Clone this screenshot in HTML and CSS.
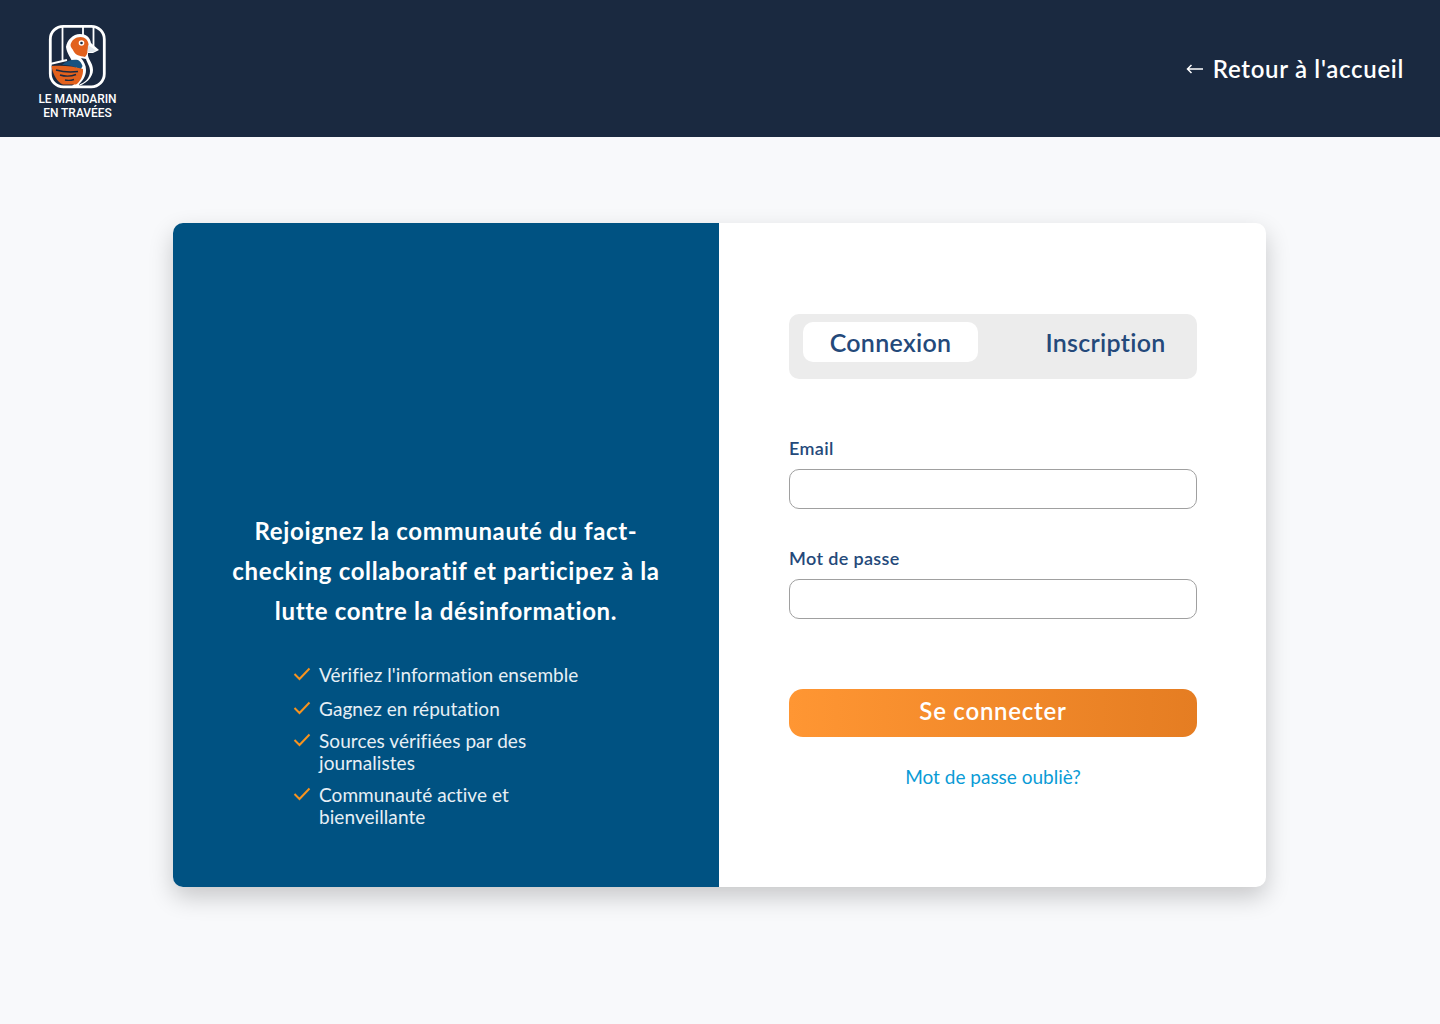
FILE: index.html
```html
<!DOCTYPE html>
<html lang="fr">
<head>
<meta charset="utf-8">
<title>Le Mandarin en Travées</title>
<link rel="stylesheet" href="styles.css">
</head>
<body>
<header class="site-header">
  <a class="brand" href="#">
    <svg class="brand-mark" width="60" height="66" viewBox="47 23 60 66" fill="none">
      <rect x="50.300" y="26.300" width="54" height="60.500" rx="13" fill="#1a2940" stroke="#fff" stroke-width="2.800"/>
      <path d="M62.500 26v35M83 26v9M93.500 26v20M50 64l17-4" stroke="#fff" stroke-width="1.800"/>
      <path d="M66 47c1-7 7-13 14-13 6 0 10 3 11 9l8 7-6 3h-5c-1 6 5 9 5 17 0 7-7 15-18 17l-3-1c5-4 7-9 6-14-1-4-3-6-5-9-2-5-6-9-7-16z" fill="#fff"/>
      <path d="M70.500 45c1-5 5-8 10-8 4.500 0 7.500 3 8 7 .3 3-.7 5-1 8-.3 2-1.500 4-2.500 5-5-1-10-2-11.500-6-.7-2-3-3.500-3-6z" fill="#e2611d"/>
      <circle cx="81.500" cy="43" r="2.800" fill="#fff"/><circle cx="81.500" cy="43" r="1.300" fill="#1a2940"/>
      <path d="M88 45l8 5.500-3 1.500h-5.500z" fill="#dfe6ec"/>
      <path d="M81 58c3 4 5 7 5 12 0 6-3 11-8 15 7-2 12-7 12-14 0-5-3-8-4-12z" fill="#1a2940"/>
      <path d="M62 65c4-4 10-6 16-5 2 1 3.500 3 4.500 6l-2 4c-6-4-12-5-18.500-5z" fill="#17527f"/>
      <path d="M51.500 66c10-1 22 0 31.500 3 .5 7-3 13-7 15.500H63c-6-2-10.500-11-11.500-18.500z" fill="#e2611d"/>
      <path d="M56 70c7 2 14 2.500 22 1.500M60 75c5 1.500 11 1.500 16-.5M65 80c3 .7 6 .5 9-.5" stroke="#1a2940" stroke-width="1.400"/>
    </svg>
    <span class="brand-name">LE MANDARIN<br>EN TRAVÉES</span>
  </a>
  <a class="back-link" href="#">
    <svg class="back-arrow" width="17" height="10" viewBox="0 0 17 10" fill="none"><path d="M17 5H1.500M5.500 1L1.500 5l4 4" stroke="#fff" stroke-width="1.500"/></svg>
    <span>Retour à l'accueil</span>
  </a>
</header>
<main class="page">
  <section class="auth-card">
    <div class="promo">
      <h2 class="promo-title">Rejoignez la communauté du fact-checking collaboratif et participez à la lutte contre la désinformation.</h2>
      <ul class="benefits">
        <li class="benefit"><svg class="check" width="18" height="14" viewBox="0 0 18 14" fill="none"><path d="M1.500 7l5 5L16.500 1.500" stroke="#f7931e" stroke-width="2"/></svg><span>Vérifiez l'information ensemble</span></li>
        <li class="benefit"><svg class="check" width="18" height="14" viewBox="0 0 18 14" fill="none"><path d="M1.500 7l5 5L16.500 1.500" stroke="#f7931e" stroke-width="2"/></svg><span>Gagnez en réputation</span></li>
        <li class="benefit"><svg class="check" width="18" height="14" viewBox="0 0 18 14" fill="none"><path d="M1.500 7l5 5L16.500 1.500" stroke="#f7931e" stroke-width="2"/></svg><span>Sources vérifiées par des journalistes</span></li>
        <li class="benefit"><svg class="check" width="18" height="14" viewBox="0 0 18 14" fill="none"><path d="M1.500 7l5 5L16.500 1.500" stroke="#f7931e" stroke-width="2"/></svg><span>Communauté active et bienveillante</span></li>
      </ul>
    </div>
    <div class="form-pane">
      <div class="tabs">
        <button class="tab tab-active" type="button">Connexion</button>
        <button class="tab" type="button">Inscription</button>
      </div>
      <form class="login-form">
        <label class="field"><span class="field-label">Email</span><input class="field-input" type="email"></label>
        <label class="field"><span class="field-label">Mot de passe</span><input class="field-input" type="password"></label>
        <button class="submit" type="button">Se connecter</button>
        <a class="forgot" href="#">Mot de passe oubliè?</a>
      </form>
    </div>
  </section>
</main>
</body>
</html>
```
FILE: styles.css
```css
* { box-sizing: border-box; }
html, body { margin: 0; height: 100%; }
body {
  background: #f8f9fb;
  font-family: "Lato", "Noto Sans", sans-serif;
  min-height: 1024px;
  overflow: hidden;
}
a { text-decoration: none; }
.site-header {
  height: 137px;
  background: #1a2940;
  display: flex;
  align-items: center;
  justify-content: space-between;
  padding: 0 36px 0 38px;
}
.brand {
  display: flex;
  flex-direction: column;
  align-items: center;
  color: #fff;
  width: 78px;
  padding-top: 6px;
}
.brand-mark { display: block; margin-bottom: 3px; }
.brand-name {
  font-family: "Roboto", sans-serif;
  font-size: 13px;
  font-weight: 500;
  line-height: 14px;
  text-align: center;
  white-space: nowrap;
  transform: scaleX(0.92);
}
.back-link {
  display: flex;
  align-items: center;
  gap: 10px;
  color: #fff;
  font-size: 24px;
  font-weight: 600;
  letter-spacing: 0.7px;
}
.back-arrow { flex: none; }
.page { padding: 86px 173px 0 173px; }
.auth-card {
  display: flex;
  width: 1093px;
  height: 664px;
  background: #fff;
  border-radius: 10px;
  box-shadow: 0 10px 24px rgba(0, 0, 0, 0.2);
  overflow: hidden;
}
.promo {
  width: 546px;
  flex: none;
  background: #005282;
  color: #fff;
  display: flex;
  flex-direction: column;
  justify-content: flex-end;
  align-items: center;
  padding: 0 56px 59px;
}
.promo-title {
  margin: 0 0 33px;
  font-size: 24px;
  font-weight: 700;
  letter-spacing: 0.65px;
  line-height: 40px;
  text-align: center;
}
.benefits {
  list-style: none;
  margin: 0;
  padding: 0;
  width: 306px;
  font-size: 19px;
  letter-spacing: 0.07px;
  line-height: 22px;
  color: #e7eff5;
}
.benefit {
  display: flex;
  align-items: flex-start;
  gap: 8px;
  margin-bottom: 10px;
}
.benefit:first-child { margin-bottom: 12px; }
.benefit:last-child { margin-bottom: 0; }
.benefit span { max-width: 270px; }
.check { flex: none; margin-top: 3px; }
.form-pane {
  flex: 1;
  padding: 91px 69px 0 70px;
}
.tabs {
  height: 64.500px;
  background: #ececec;
  border-radius: 10px;
  display: flex;
  align-items: flex-start;
  justify-content: space-between;
  padding: 8px 4px 0 14px;
}
.tab {
  border: 0;
  background: transparent;
  color: #24497a;
  font: 600 25px "Lato", sans-serif;
  letter-spacing: 0.3px;
  width: 175px;
  height: 40px;
  border-radius: 10px;
}
.tab-active { background: #fff; }
.login-form { display: flex; flex-direction: column; margin-top: 58.500px; }
.field { display: block; margin-bottom: 38.500px; }
.field-label {
  display: block;
  color: #24497a;
  font-size: 18px;
  font-weight: 600;
  letter-spacing: 0.35px;
  line-height: 22px;
  margin-bottom: 9.500px;
}
.field-input {
  display: block;
  width: 100%;
  height: 40px;
  border: 1px solid #a0a0a0;
  border-radius: 10px;
  background: #fff;
}
.submit {
  margin-top: 31.500px;
  height: 48px;
  border: 0;
  border-radius: 14px;
  padding: 0 0 4px;
  background: linear-gradient(90deg, #ff9633, #e57d22);
  color: #fff;
  font: 600 24px "Lato", sans-serif;
  letter-spacing: 0.75px;
}
.forgot {
  margin-top: 28.500px;
  text-align: center;
  color: #0a9bd6;
  font-size: 19px;
  line-height: 24px;
}
```
